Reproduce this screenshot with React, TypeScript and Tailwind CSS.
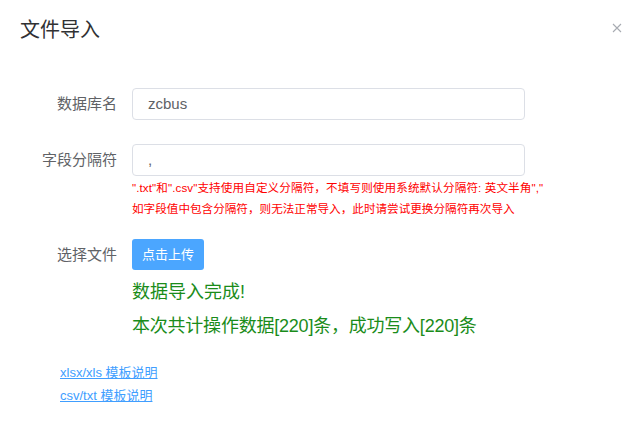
import React from "react";

const font = "font-['Liberation_Sans','Noto_Sans_CJK_SC',sans-serif]";

function Label({ children }: { children: React.ReactNode }) {
  return (
    <div className="w-[117px] shrink-0 text-right text-[15px] leading-[32px] text-[#606266]">
      {children}
    </div>
  );
}

export default function App() {
  return (
    <div className={`relative h-[425px] w-[642px] overflow-hidden bg-white ${font}`}>

      {/* HEADER */}
      <div className="flex items-center justify-between px-[20px] pt-[18px]">
        <div className="text-[20px] leading-[24px] text-[#303133]">文件导入</div>
        <button className="absolute right-[20px] top-[23px] flex h-[10px] w-[10px] items-center justify-center">
          <svg width="10" height="10" viewBox="0 0 10 10">
            <path d="M1 1L9 9M9 1L1 9" stroke="#a8abb2" strokeWidth="1.1" />
          </svg>
        </button>
      </div>

      {/* FORM */}
      <div className="mt-[46px] flex flex-col">

        <div className="flex items-start">
          <Label>数据库名</Label>
          <div className="ml-[15px] flex h-[32px] w-[393px] items-center rounded-[4px] border border-[#dcdfe6] px-[15px] text-[15px] text-[#606266]">
            zcbus
          </div>
        </div>

        <div className="mt-[24px] flex items-start">
          <Label>字段分隔符</Label>
          <div className="ml-[15px] flex w-[393px] flex-col">
            <div className="flex h-[32px] items-center rounded-[4px] border border-[#dcdfe6] px-[15px] text-[15px] text-[#606266]">
              ,
            </div>
            <div className="mt-[1px] text-[11.6px] leading-[21px] text-[#ff0000]">
              <div className="whitespace-nowrap tracking-[0.1px]">".txt"和".csv"支持使用自定义分隔符，不填写则使用系统默认分隔符: 英文半角","</div>
              <div className="whitespace-nowrap">如字段值中包含分隔符，则无法正常导入，此时请尝试更换分隔符再次导入</div>
            </div>
          </div>
        </div>

        <div className="mt-[20px] flex items-start">
          <Label>选择文件</Label>
          <div className="ml-[15px] flex flex-col">
            <button className="h-[31px] w-[72px] rounded-[3px] bg-[#4ba6ff] text-[13px] text-white">
              点击上传
            </button>
            <div className="mt-[9px] text-[18px] leading-[26px] text-[#1a8c1a]">数据导入完成!</div>
            <div className="mt-[8px] whitespace-nowrap text-[18px] leading-[26px] tracking-[-0.22px] text-[#1a8c1a]">本次共计操作数据[220]条，成功写入[220]条</div>
          </div>
        </div>

      </div>

      {/* LINKS */}
      <div className="mt-[22px] flex flex-col items-start px-[60px] text-[13px] leading-[23px]">
        <a className="text-[#409eff] underline">xlsx/xls 模板说明</a>
        <a className="text-[#409eff] underline">csv/txt 模板说明</a>
      </div>

    </div>
  );
}
